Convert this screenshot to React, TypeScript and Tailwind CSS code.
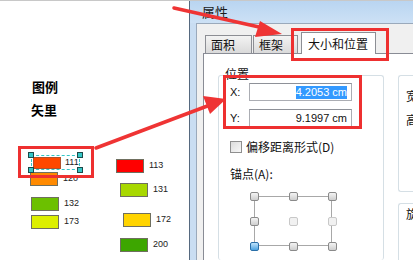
import React from "react";

const cjk = { fontFamily: '"Noto Sans CJK SC", "Noto Sans", sans-serif' };
const latin = { fontFamily: '"Liberation Sans", Arial, sans-serif' };

function Swatch({ color, label, ml, mt, gap }: { color: string; label: string; ml: number; mt: number; gap: number }) {
  return (
    <div className="flex items-center" style={{ marginLeft: ml, marginTop: mt }}>
      <div className="w-[28px] h-[14px] border border-[#6f6f5f]" style={{ background: color }} />
      <span className="text-[9px] text-[#222]" style={{ ...latin, marginLeft: gap }}>{label}</span>
    </div>
  );
}

function Handle() {
  return <div className="w-[6px] h-[6px] bg-[#35c6c6] border border-[#1d4a4a]" />;
}

function AnchorDot({ active, faint }: { active?: boolean; faint?: boolean }) {
  return (
    <div
      className={`w-[9px] h-[9px] rounded-[2px] border ${
        active
          ? "border-[#2a6fa8] bg-gradient-to-b from-[#bfe3fb] to-[#4aa3e0]"
          : faint
          ? "border-[#c8c8c8] bg-[#f1f1f1]"
          : "border-[#8a8a8a] bg-gradient-to-b from-[#f4f4f4] to-[#cfcfcf]"
      }`}
    />
  );
}

export default function App() {
  return (
    <div className="relative w-[413px] h-[260px] overflow-hidden bg-white flex border-t border-[#c8c8c8]" style={cjk}>
      {/* map layout legend */}
      <div className="w-[189px] shrink-0 flex flex-col">
        <div className="mt-[78px] ml-[32px] text-[13px] font-bold leading-[16px] text-black">图例</div>
        <div className="mt-[7px] ml-[31px] text-[13px] font-bold leading-[16px] text-black">矢里</div>
        <div className="flex">
          <div className="flex flex-col w-[100px]">
            <div className="relative ml-[31px] mt-[37px] w-[49px] h-[15px] border border-dashed border-[#35c6c6] flex items-center">
              <div className="ml-[1px] w-[28px] h-[12px] bg-[#ff4800] border border-[#b3502a]" />
              <span className="ml-[4px] text-[9px] text-[#222]" style={latin}>111</span>
              <div className="absolute -left-[4px] -top-[4px]"><Handle /></div>
              <div className="absolute -right-[4px] -top-[4px]"><Handle /></div>
              <div className="absolute -left-[4px] -bottom-[4px]"><Handle /></div>
              <div className="absolute -right-[4px] -bottom-[4px]"><Handle /></div>
            </div>
            <Swatch color="#ff8a00" label="120" ml={30} mt={2} gap={5} />
            <Swatch color="#6cc000" label="132" ml={31} mt={11} gap={5} />
            <Swatch color="#dcef00" label="173" ml={31} mt={4} gap={5} />
          </div>
          <div className="flex flex-col">
            <Swatch color="#ff0000" label="113" ml={16} mt={41} gap={5} />
            <Swatch color="#a8d800" label="131" ml={20} mt={10} gap={5} />
            <Swatch color="#ffd400" label="172" ml={23} mt={16} gap={5} />
            <Swatch color="#3da600" label="200" ml={20} mt={11} gap={5} />
          </div>
        </div>
      </div>

      {/* properties dialog */}
      <div className="flex-1 flex flex-col border-l border-[#56697f]">
        <div className="h-[22px] shrink-0 bg-gradient-to-b from-[#b9d5f1] to-[#cde1f5] pl-[12px] text-[13px] leading-[22px] text-[#1b1b1b]">
          属性
        </div>
        <div className="flex-1 flex">
          <div className="w-[6px] bg-[#c9ddf2]" />
          <div className="flex-1 flex flex-col bg-[#f0f0f0] border-l border-t border-[#9aa9bb] pt-[7px] pl-[6px]">
            <div className="flex items-end h-[22px] ml-[2px]">
              <div className="w-[47px] h-[18px] border border-b-0 border-[#8c8e94] bg-gradient-to-b from-[#f3f3f3] to-[#dadada] text-[12px] leading-[17px] pl-[5px] text-[#111]">
                面积
              </div>
              <div className="w-[45px] h-[18px] ml-[1px] border border-b-0 border-[#8c8e94] bg-gradient-to-b from-[#f3f3f3] to-[#dadada] text-[12px] leading-[17px] pl-[5px] text-[#111]">
                框架
              </div>
              <div className="relative z-10 w-[75px] h-[22px] ml-[3px] -mb-px border border-b-0 border-[#8c8e94] bg-white text-[12px] leading-[21px] pl-[6px] text-[#111]">
                大小和位置
              </div>
            </div>
            <div className="flex-1 flex bg-white border-l border-t border-[#898c95] pl-[14px] pt-[21px]">
              <div className="relative w-[166px] border border-[#d5dfe5] rounded-[3px] border-b-0 pl-[11px] flex flex-col">
                <div className="absolute -top-[10px] left-[5px] bg-white px-[1px] text-[12px] leading-[16px] text-[#111]">位置</div>
                <div className="mt-[7px] flex items-center">
                  <span className="w-[19px] text-[11px] text-[#111]" style={latin}>X:</span>
                  <div className="w-[103px] h-[18px] border border-[#abadb3] border-t-[#8e9198] flex items-center justify-end pr-[4px]">
                    <span className="bg-[#3399ff] text-white text-[11px] leading-[13px]" style={latin}>4.2053 cm</span>
                  </div>
                </div>
                <div className="mt-[8px] flex items-center">
                  <span className="w-[19px] text-[11px] text-[#111]" style={latin}>Y:</span>
                  <div className="w-[103px] h-[18px] border border-[#abadb3] border-t-[#8e9198] flex items-center justify-end pr-[4px]">
                    <span className="text-[#111] text-[11px] leading-[13px]" style={latin}>9.1997 cm</span>
                  </div>
                </div>
                <div className="mt-[13px] flex items-center">
                  <div className="w-[12px] h-[12px] border border-[#8f8f8f] bg-gradient-to-br from-[#dcdcdc] to-[#f8f8f8]" />
                  <span className="ml-[4px] text-[12px] leading-[14px] text-[#111]">偏移距离形式(D)</span>
                </div>
                <div className="mt-[13px] text-[12px] leading-[14px] text-[#111]">锚点(A):</div>
                <div className="relative mt-[11px] ml-[20px] w-[87px] h-[59px]">
                  <div className="absolute left-[4px] top-[4px] w-[78px] h-[50px] border border-[#a8a8a8]" />
                  <div className="relative flex flex-col justify-between h-full">
                    <div className="flex justify-between"><AnchorDot /><AnchorDot /><AnchorDot /></div>
                    <div className="flex justify-between"><AnchorDot /><AnchorDot faint /><AnchorDot faint /></div>
                    <div className="flex justify-between"><AnchorDot active /><AnchorDot /><AnchorDot /></div>
                  </div>
                </div>
              </div>
              <div className="ml-[14px] flex-1 flex flex-col">
                <div className="relative h-[117px] border border-r-0 border-[#d5dfe5] rounded-l-[3px] pl-[7px] pt-[8px] text-[12px] leading-[24px] text-[#111] overflow-hidden">
                  <div>宽</div>
                  <div>高</div>
                </div>
                <div className="mt-[11px] flex-1 border border-r-0 border-b-0 border-[#d5dfe5] rounded-tl-[3px] pl-[7px] pt-[1px] text-[12px] text-[#111] overflow-hidden">
                  旋
                </div>
              </div>
            </div>
          </div>
        </div>
      </div>

      {/* annotations */}
      <div className="absolute left-[291px] top-[27px] w-[98px] h-[33px] border-[3px] border-[#ee3030]" />
      <div className="absolute left-[223px] top-[74px] w-[139px] h-[54px] border-[3px] border-[#ee3030]" />
      <div className="absolute left-[18px] top-[145px] w-[76px] h-[32px] border-[3px] border-[#ee3030]" />
      <svg className="absolute inset-0 pointer-events-none" width="413" height="260" viewBox="0 0 413 260">
        <line x1="174" y1="7" x2="268" y2="28" stroke="#ef3434" strokeWidth="3.5" strokeLinecap="round" />
        <polygon points="282,33 260,20 255,36" fill="#ef3434" />
        <line x1="96" y1="147" x2="210" y2="104" stroke="#ef3434" strokeWidth="3.5" strokeLinecap="round" />
        <polygon points="226,98 203,95 210,113" fill="#ef3434" />
      </svg>
    </div>
  );
}
